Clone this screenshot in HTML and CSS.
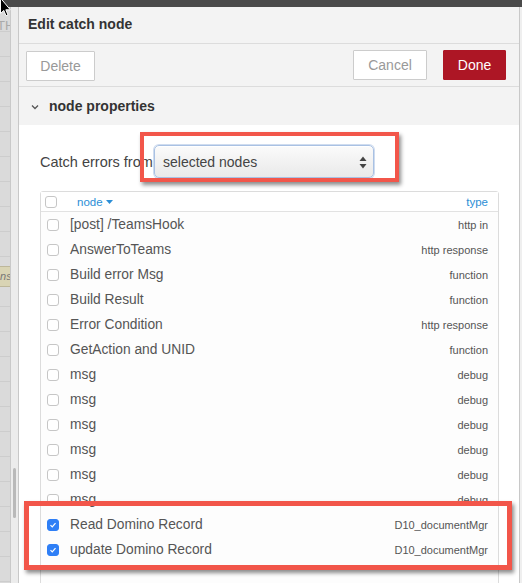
FILE: index.html
```html
<!DOCTYPE html>
<html>
<head>
<meta charset="utf-8">
<link rel="stylesheet" href="styles.css">
</head>
<body>
<div class="topbar"></div>
<div class="main">
  <div class="canvas">
    <span class="canvas-th">TH</span>
    <span class="canvas-node">ans</span>
  </div>
  <div class="gutter"><div class="thumb"></div></div>
  <div class="tray">
    <div class="tray-title">Edit catch node</div>
    <div class="tray-buttons">
      <button class="btn btn-delete">Delete</button>
      <div class="spacer"></div>
      <button class="btn btn-cancel">Cancel</button>
      <button class="btn btn-done">Done</button>
    </div>
    <div class="section-head">
      <svg class="chevron" width="8" height="6" viewBox="0 0 8 6"><polyline points="1,1.5 4,4.5 7,1.5" fill="none" stroke="#555" stroke-width="1.3"/></svg>
      <span>node properties</span>
    </div>
    <div class="props">
      <div class="form-row">
        <label class="form-label">Catch errors from</label>
        <div class="select">
          <span>selected nodes</span>
          <svg class="select-arrows" width="8" height="13" viewBox="0 0 8 13"><polygon points="4,0.5 7.5,5 0.5,5" fill="#444"/><polygon points="0.5,8 7.5,8 4,12.5" fill="#444"/></svg>
        </div>
      </div>
      <div class="node-table">
        <div class="thead">
          <span class="cb cb-head"></span>
          <span class="th-node">node <svg width="7" height="4" viewBox="0 0 7 4"><polygon points="0,0 7,0 3.5,4" fill="#2b8ed6"/></svg></span>
          <span class="th-type">type</span>
        </div>
        <div class="tbody">
          <div class="row"><span class="cb"></span><span class="name">[post] /TeamsHook</span><span class="type">http in</span></div>
          <div class="row"><span class="cb"></span><span class="name">AnswerToTeams</span><span class="type">http response</span></div>
          <div class="row"><span class="cb"></span><span class="name">Build error Msg</span><span class="type">function</span></div>
          <div class="row"><span class="cb"></span><span class="name">Build Result</span><span class="type">function</span></div>
          <div class="row"><span class="cb"></span><span class="name">Error Condition</span><span class="type">http response</span></div>
          <div class="row"><span class="cb"></span><span class="name">GetAction and UNID</span><span class="type">function</span></div>
          <div class="row"><span class="cb"></span><span class="name">msg</span><span class="type">debug</span></div>
          <div class="row"><span class="cb"></span><span class="name">msg</span><span class="type">debug</span></div>
          <div class="row"><span class="cb"></span><span class="name">msg</span><span class="type">debug</span></div>
          <div class="row"><span class="cb"></span><span class="name">msg</span><span class="type">debug</span></div>
          <div class="row"><span class="cb"></span><span class="name">msg</span><span class="type">debug</span></div>
          <div class="row"><span class="cb"></span><span class="name">msg</span><span class="type">debug</span></div>
          <div class="row"><span class="cb cb-on"><svg width="12" height="12" viewBox="0 0 12 12"><polyline points="3,6.2 5.1,8.3 9,3.8" fill="none" stroke="#fff" stroke-width="1.5"/></svg></span><span class="name">Read Domino Record</span><span class="type">D10_documentMgr</span></div>
          <div class="row"><span class="cb cb-on"><svg width="12" height="12" viewBox="0 0 12 12"><polyline points="3,6.2 5.1,8.3 9,3.8" fill="none" stroke="#fff" stroke-width="1.5"/></svg></span><span class="name">update Domino Record</span><span class="type">D10_documentMgr</span></div>
        </div>
      </div>
    </div>
  </div>
  <div class="edge"></div>
</div>
<div class="annot annot-select"></div>
<div class="annot annot-rows"></div>
<svg class="cursor" width="12" height="18" viewBox="0 0 12 18"><path d="M0.5,-2 L0.5,13.5 L3.8,10.4 L6,15.8 L8,15 L5.8,9.8 L10.3,9.8 Z" fill="#000" stroke="#fff" stroke-width="1"/></svg>
</body>
</html>
```
FILE: styles.css
```css
* { box-sizing: border-box; }
html, body {
  margin: 0;
  padding: 0;
}
body {
  width: 522px;
  height: 583px;
  overflow: hidden;
  position: relative;
  font-family: "Liberation Sans", Arial, sans-serif;
  color: #555;
  background: #fff;
  display: flex;
  flex-direction: column;
}
.topbar {
  height: 7px;
  flex: none;
  background: #4a4a4a;
}
.main {
  flex: 1;
  display: flex;
  min-height: 0;
}
.canvas {
  width: 11px;
  flex: none;
  position: relative;
  overflow: hidden;
  background-color: #dadada;
  background-image: repeating-linear-gradient(to bottom, transparent 0, transparent 24px, #cdcdcd 24px, #cdcdcd 25px);
  border-right: 1px solid #c9c9c9;
}
.canvas-th {
  position: absolute;
  left: -3px;
  top: 11px;
  font-size: 13px;
  color: #aaa;
}
.canvas-node {
  position: absolute;
  left: -6px;
  top: 259px;
  width: 17px;
  height: 21px;
  background: #d9d4b4;
  border-top: 1px solid #bdb79a;
  border-bottom: 1px solid #bdb79a;
  font-size: 11px;
  font-style: italic;
  line-height: 19px;
  color: #777;
}
.gutter {
  width: 7px;
  flex: none;
  background: #ececec;
  position: relative;
}
.thumb {
  position: absolute;
  left: 2px;
  top: 461px;
  width: 3px;
  height: 50px;
  border-radius: 2px;
  background: #b9b9b9;
}
.tray {
  flex: 1;
  display: flex;
  flex-direction: column;
  min-width: 0;
  border-left: 1px solid #c8c8c8;
  border-right: 1px solid #c8c8c8;
  background: #fff;
}
.edge {
  width: 2px;
  flex: none;
  background: #efefef;
}
.tray-title {
  height: 37px;
  flex: none;
  background: #f3f3f3;
  border-bottom: 1px solid #dcdcdc;
  padding: 9px 0 0 9px;
  font-size: 14px;
  font-weight: bold;
  color: #333;
}
.tray-buttons {
  height: 43px;
  flex: none;
  background: #f3f3f3;
  border-bottom: 1px solid #dcdcdc;
  display: flex;
  align-items: center;
  padding: 0 13px 0 7px;
}
.spacer { flex: 1; }
.btn {
  height: 30px;
  margin: 0;
  border: 1px solid #ccc;
  border-radius: 1px;
  background: #fff;
  color: #999;
  font-family: "Liberation Sans", Arial, sans-serif;
  font-size: 14px;
  padding: 0;
}
.btn-delete { width: 69px; margin-top: 2px; }
.btn-cancel { width: 74px; margin-right: 16px; }
.btn-done {
  width: 63px;
  background: #ad1625;
  border-color: #ad1625;
  color: #fff;
}
.section-head {
  height: 38px;
  flex: none;
  background: #f3f3f3;
  display: flex;
  align-items: center;
  padding-left: 12px;
  font-size: 14px;
  font-weight: bold;
  color: #333;
}
.chevron { margin-right: 10px; margin-top: 2px; }
.props {
  flex: 1;
  padding: 20px 20px 0 21px;
  overflow: hidden;
}
.form-row {
  display: flex;
  align-items: center;
  height: 33px;
  margin-bottom: 13px;
}
.form-label {
  width: 114px;
  flex: none;
  font-size: 14.5px;
  color: #444;
  padding-top: 1px;
}
.select {
  width: 220px;
  height: 33px;
  border: 1px solid #a9c1e3;
  border-radius: 5px;
  background: linear-gradient(to bottom, #fbfbfb, #e9e9e9);
  box-shadow: 0 0 0 1px #cfdcef, inset 0 1px 0 #fff;
  display: flex;
  align-items: center;
  justify-content: space-between;
  padding: 0 6px 0 8px;
  font-size: 14px;
  color: #444;
}
.select-arrows { margin-top: 1px; }
.node-table {
  border: 1px solid #dcdcdc;
  border-radius: 3px 3px 0 0;
  height: 420px;
  background: #fdfdfd;
}
.thead {
  height: 20px;
  border-bottom: 1px solid #e2e2e2;
  background: #fff;
  display: flex;
  align-items: center;
  padding: 0 10px 0 4px;
  font-size: 11.5px;
  color: #2b8ed6;
}
.th-node {
  margin-left: 20px;
  display: flex;
  align-items: center;
  gap: 3px;
}
.th-type { margin-left: auto; }
.row {
  height: 25px;
  display: flex;
  align-items: center;
  padding: 0 10px 0 6px;
}
.cb {
  width: 12px;
  height: 12px;
  flex: none;
  border: 1px solid #c6c6c6;
  border-radius: 3px;
  background: #fff;
  display: inline-block;
}
.cb-head { margin-top: 1px; }
.cb-on {
  background: #2f7ff6;
  border-color: #2f7ff6;
  display: flex;
  align-items: center;
  justify-content: center;
}
.cb-on svg { display: block; }
.name {
  margin-left: 11px;
  font-size: 13.8px;
  color: #555;
}
.type {
  margin-left: auto;
  font-size: 11px;
  color: #555;
}
.annot {
  position: absolute;
  border: 4px solid #f2564a;
  box-shadow: 2px 3px 4px rgba(0, 0, 0, 0.45);
  pointer-events: none;
}
.annot-select {
  left: 140px;
  top: 132px;
  width: 259px;
  height: 50px;
}
.annot-rows {
  left: 24px;
  top: 501px;
  width: 488px;
  height: 69px;
  border-width: 5px;
}
.cursor {
  position: absolute;
  left: 0;
  top: 0;
}
```
